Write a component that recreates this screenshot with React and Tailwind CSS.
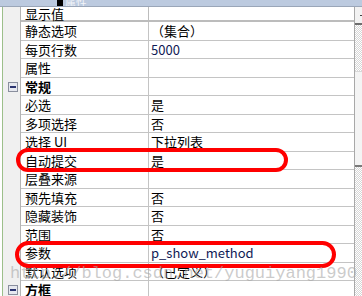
import React from "react";

const rows = [
  { name: "静态选项", value: "（集合）" },
  { name: "每页行数", value: "5000", latin: true },
  { name: "属性", value: "" },
  { name: "常规", value: "", group: true },
  { name: "必选", value: "是" },
  { name: "多项选择", value: "否" },
  { name: "选择 UI", value: "下拉列表" },
  { name: "自动提交", value: "是" },
  { name: "层叠来源", value: "" },
  { name: "预先填充", value: "否" },
  { name: "隐藏装饰", value: "否" },
  { name: "范围", value: "否" },
  { name: "参数", value: "p_show_method", latin: true },
  { name: "默认选项", value: "（已定义）" },
  { name: "方框", value: "", group: true },
];

const Toggle = () => (
  <div className="w-[10px] h-[10px] border border-[#8a8f9e] bg-[#e6e8ef] flex items-center justify-center">
    <div className="w-[6px] h-[2px] bg-[#2b3470]" />
  </div>
);

const Row = ({ row }) => (
  <div className="flex h-[18.5px] shrink-0">
    <div className="w-[18px] bg-[#f0f0f0] border-r border-[#b4b4b4] flex items-center justify-center pl-[2px]">
      {row.group && <Toggle />}
    </div>
    <div
      className={`w-[128px] border-b border-r border-[#c4c4c4] pl-[4px] flex items-center text-[13px] text-black ${
        row.group ? "font-bold" : ""
      }`}
    >
      {row.name}
    </div>
    <div
      className={`flex-1 border-b border-[#c4c4c4] pl-[2px] flex items-center text-[13px] ${
        row.latin ? "text-[#101a55]" : "text-black"
      }`}
    >
      {row.value}
    </div>
  </div>
);

export default function App() {
  return (
    <div
      className="relative w-[362px] h-[296px] overflow-hidden bg-white flex flex-col"
      style={{ fontFamily: '"Noto Sans CJK SC", "Liberation Sans", sans-serif' }}
    >
      {/* title strip */}
      <div className="h-[7px] shrink-0 bg-[#bccadf] border-b border-[#9aa6b8] flex items-end pl-[57px] overflow-hidden">
        <div className="w-[6px] h-[7px] bg-black" />
        <span className="text-[11px] leading-[7px] text-white/80 pl-[2px]">属性</span>
      </div>

      <div className="flex flex-1 min-h-0">
        <div className="w-[2px] bg-white" />
        <div className="w-[1px] bg-[#9cbf8a]" />

        <div className="flex-1 flex flex-col min-w-0">
          {/* top partial row */}
          <div className="flex h-[15px] shrink-0">
            <div className="w-[18px] bg-[#f0f0f0] border-r border-[#b4b4b4]" />
            <div className="w-[128px] border-b-2 border-r border-[#bcbcbc] pl-[4px] flex items-center text-[13px] text-black">
              显示值
            </div>
            <div className="flex-1 border-b-2 border-[#bcbcbc]" />
          </div>
          {rows.map((row) => (
            <Row key={row.name} row={row} />
          ))}
          <div className="flex flex-1">
            <div className="w-[18px] bg-[#f0f0f0] border-r border-[#b4b4b4]" />
            <div className="w-[128px] border-r border-[#c4c4c4]" />
          </div>
        </div>

        {/* scrollbar */}
        <div className="w-[8px] flex flex-col border-l border-[#a8a8a8]">
          <div className="h-[18px] bg-[#f2f2f2] border-b-2 border-[#6e6e6e] flex items-center justify-end">
            <div className="w-[2px] h-[1px] bg-[#444]" />
          </div>
          <div className="h-[46px] bg-[repeating-conic-gradient(#d6d6d6_0_25%,#ffffff_0_50%)] bg-[length:2px_2px]" />
          <div className="h-[96px] bg-[#f4f4f4] border-t border-[#d8d8d8] border-b-2 border-b-[#7a7a7a]" />
          <div className="flex-1 bg-[repeating-conic-gradient(#d6d6d6_0_25%,#ffffff_0_50%)] bg-[length:2px_2px]" />
        </div>
      </div>

      {/* annotation ellipses */}
      <div className="absolute left-[16px] top-[148px] w-[272px] h-[24px] rounded-full border-[4px] border-[#ff0000]" />
      <div className="absolute left-[15px] top-[241px] w-[321px] h-[27px] rounded-full border-[4px] border-[#ff0000]" />

      {/* watermark */}
      <div
        className="absolute left-[10px] top-[264px] text-[17px] leading-[20px] text-[#a8a8a8]/60 whitespace-nowrap"
        style={{ fontFamily: '"Liberation Mono", monospace' }}
      >
        http://blog.csdn.net/yuguiyang1990
      </div>
    </div>
  );
}
